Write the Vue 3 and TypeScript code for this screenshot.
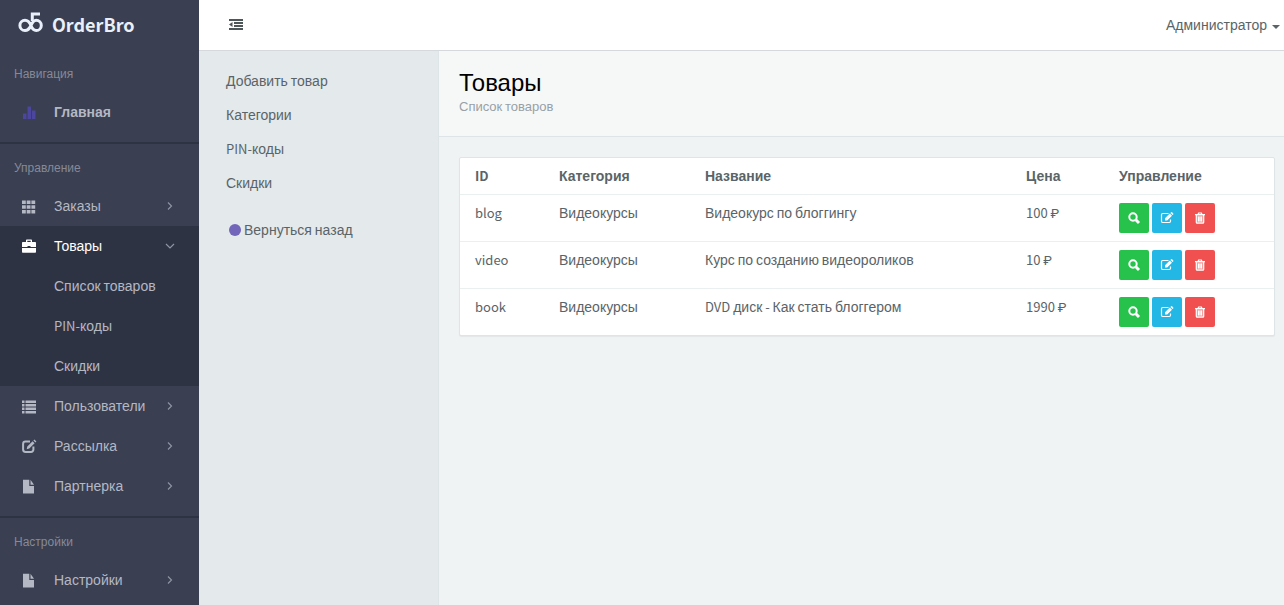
<script setup lang="ts">
import { h, type FunctionalComponent } from 'vue'

interface NavItem {
  label: string
  icon: string
  state?: 'closed' | 'open'
  strong?: boolean
  children?: string[]
}
interface NavSection {
  title: string
  items: NavItem[]
}
interface Product {
  id: string
  category: string
  name: string
  price: number
}

// Latin letters, digits and spaces use a different family than Cyrillic.
const MixedText: FunctionalComponent<{ text: string }> = (props) =>
  h(
    'span',
    (props.text.match(/[\x20-\x7e]+|₽|[^\x20-\x7e₽]+/g) ?? []).map((run) => {
      if (run === '₽') return h('span', { class: 'ruble' }, run)
      return /^[\x20-\x7e]/.test(run) ? h('span', { class: 'latin' }, run) : run
    }),
  )
MixedText.props = ['text']

const sections: NavSection[] = [
  { title: 'Навигация', items: [{ label: 'Главная', icon: 'bars', strong: true }] },
  {
    title: 'Управление',
    items: [
      { label: 'Заказы', icon: 'grid', state: 'closed' },
      {
        label: 'Товары',
        icon: 'case',
        state: 'open',
        children: ['Список товаров', 'PIN-коды', 'Скидки'],
      },
      { label: 'Пользователи', icon: 'list', state: 'closed' },
      { label: 'Рассылка', icon: 'edit', state: 'closed' },
      { label: 'Партнерка', icon: 'file', state: 'closed' },
    ],
  },
  { title: 'Настройки', items: [{ label: 'Настройки', icon: 'file', state: 'closed' }] },
]

const shortcuts = ['Добавить товар', 'Категории', 'PIN-коды', 'Скидки']
const columns = ['ID', 'Категория', 'Название', 'Цена', 'Управление']
const products: Product[] = [
  { id: 'blog', category: 'Видеокурсы', name: 'Видеокурс по блоггингу', price: 100 },
  { id: 'video', category: 'Видеокурсы', name: 'Курс по созданию видеороликов', price: 10 },
  { id: 'book', category: 'Видеокурсы', name: 'DVD диск - Как стать блоггером', price: 1990 },
]
</script>

<template>
  <div class="app">
    <aside class="sidebar">
      <a class="brand" href="#">
        <svg class="logo" viewBox="0 0 25 23" aria-hidden="true">
          <path d="M13 14.5C11.500 11 9.500 9.300 7 9.300a5.100 5.100 0 0 0 0 10.200c2.500 0 4.400-1.600 6-5C14.500 11 16 9.300 18.200 9.300a5.100 5.100 0 0 1 0 10.200c-2.400 0-4-1.700-5.200-5" />
          <path d="M14.300 10V3H22" />
        </svg>
        <span class="latin-brand">OrderBro</span>
      </a>
      <nav>
        <section v-for="section in sections" :key="section.title" class="nav-section">
          <h2>{{ section.title }}</h2>
          <ul>
            <li v-for="item in section.items" :key="item.label" :class="{ open: item.state === 'open' }">
              <a href="#" class="nav-link" :class="{ strong: item.strong }">
                <svg class="nav-icon" :class="item.icon" viewBox="0 0 16 16" aria-hidden="true">
                  <path v-if="item.icon === 'bars'" d="M2 8.500h3.500V14H2zM6.500 1.500H10V14H6.500zM11 5.500h3.500V14H11z" />
                  <path v-else-if="item.icon === 'grid'" d="M1 1.500h3.800v3.500H1zM5.700 1.500h3.800v3.500H5.700zM10.400 1.500h3.800v3.500h-3.800zM1 6.200h3.800v3.500H1zM5.700 6.200h3.800v3.500H5.700zM10.400 6.200h3.800v3.500h-3.800zM1 10.900h3.800v3.500H1zM5.700 10.900h3.800v3.500H5.700zM10.400 10.900h3.800v3.500h-3.800z" />
                  <path v-else-if="item.icon === 'case'" fill-rule="evenodd" d="M5 3V1.500C5 .7 5.500.5 6 .5h4c.6 0 1 .3 1 1V3h3c.6 0 1 .4 1 1v4H9.500V7h-3v1H1V4c0-.6.400-1 1-1zM6.300 3h3.400V1.700H6.300zM1 9h14v3.800c0 .6-.4 1-1 1H2c-.6 0-1-.4-1-1z" />
                  <path v-else-if="item.icon === 'list'" d="M1 1.500h2.500v2.400H1zM4.500 1.500H15v2.400H4.500zM1 5h2.500v2.400H1zM4.500 5H15v2.400H4.500zM1 8.500h2.500v2.400H1zM4.500 8.500H15v2.400H4.500zM1 12h2.500v2.400H1zM4.500 12H15v2.400H4.500z" />
                  <g v-else-if="item.icon === 'edit'">
                    <path class="stroke" d="M9 2.500H4.500A2.400 2.400 0 0 0 2.100 4.900v5.700A2.400 2.400 0 0 0 4.500 13H10a2.400 2.400 0 0 0 2.400-2.400V7.500" />
                    <path d="M5.700 10.300l.6-2.800L11.600 2.200l2 2-5.300 5.300zM12.400 1.500l1-1 2 2-1 1z" />
                  </g>
                  <path v-else d="M2 .8h6.300V7H13v7.500H2zM9.500.8L13 5.700H9.500z" />
                </svg>
                <span class="nav-label">{{ item.label }}</span>
                <svg v-if="item.state" class="chevron" viewBox="0 0 10 10" aria-hidden="true">
                  <path :d="item.state === 'open' ? 'M1 3l4 4 4-4' : 'M3 1.500l3.500 3.500L3 8.500'" />
                </svg>
              </a>
              <ul v-if="item.children">
                <li v-for="child in item.children" :key="child">
                  <a href="#" class="nav-link child"><MixedText :text="child" /></a>
                </li>
              </ul>
            </li>
          </ul>
        </section>
      </nav>
    </aside>

    <div class="page">
      <header class="topbar">
        <button type="button" class="toggle" aria-label="Меню">
          <svg viewBox="0 0 14 12" aria-hidden="true">
            <path d="M0 0h14v2H0zM5 3h9v2H5zM5 6h9v2H5zM0 9h14v2H0zM0 5.500L3.500 3v5z" />
          </svg>
        </button>
        <button type="button" class="user">Администратор <span class="caret"></span></button>
      </header>

      <div class="body">
        <nav class="shortcuts">
          <a v-for="link in shortcuts" :key="link" href="#"><MixedText :text="link" /></a>
          <a href="#" class="back"><span class="dot"></span><MixedText text="Вернуться назад" /></a>
        </nav>

        <main>
          <div class="heading">
            <h1>Товары</h1>
            <p><MixedText text="Список товаров" /></p>
          </div>
          <div class="panel">
            <table>
              <colgroup>
                <col class="col-id" /><col class="col-category" /><col /><col class="col-price" /><col class="col-actions" />
              </colgroup>
              <thead>
                <tr>
                  <th v-for="column in columns" :key="column" scope="col"><MixedText :text="column" /></th>
                </tr>
              </thead>
              <tbody>
                <tr v-for="product in products" :key="product.id">
                  <td><MixedText :text="product.id" /></td>
                  <td>{{ product.category }}</td>
                  <td><MixedText :text="product.name" /></td>
                  <td><MixedText :text="`${product.price} ₽`" /></td>
                  <td>
                    <div class="actions">
                      <button type="button" class="view" aria-label="Просмотр">
                        <svg viewBox="0 0 12 12" aria-hidden="true">
                          <circle cx="5" cy="5" r="3.700" />
                          <path class="handle" d="M7.800 7.800L11 11" />
                        </svg>
                      </button>
                      <button type="button" class="change" aria-label="Изменить">
                        <svg viewBox="0 0 12 12" aria-hidden="true">
                          <path class="frame" d="M7.500 1.500H1.700A1.200 1.200 0 0 0 .5 2.700v6.600a1.200 1.200 0 0 0 1.200 1.200h6.600a1.200 1.200 0 0 0 1.200-1.200V7.500" />
                          <path class="solid" d="M4 8.500V6.300l4.800-4.800L11 3.700 6.200 8.500zM9.400 1l.7-.7c.3-.3.700-.3 1 0l1.100 1.100c.3.300.3.700 0 1l-.700.7z" />
                        </svg>
                      </button>
                      <button type="button" class="remove" aria-label="Удалить">
                        <svg viewBox="0 0 12 12" aria-hidden="true">
                          <path class="tint" d="M2.300 3h7.400v8H2.300z" />
                          <path class="bin" d="M1 2.700h10M2.300 3v7.200c0 .6.300 1 .8 1h5.800c.5 0 .8-.4.8-1V3M4 2.500l.6-1.500h2.800L8 2.500M4.500 4.500v5M6 4.500v5M7.500 4.500v5" />
                        </svg>
                      </button>
                    </div>
                  </td>
                </tr>
              </tbody>
            </table>
          </div>
        </main>
      </div>
    </div>
  </div>
</template>

<style>
body {
  margin: 0;
}
.latin {
  font-family: 'Noto Sans CJK SC', sans-serif;
  font-size: 13px;
  line-height: 1;
}
.ruble {
  font-family: Roboto, sans-serif;
  font-size: 13px;
  line-height: 1;
}
</style>

<style scoped>
.app {
  display: flex;
  min-height: 100vh;
  font-family: 'Liberation Sans', Arial, sans-serif;
  font-size: 14px;
  line-height: 20px;
  color: #5a6468;
  background: #f0f3f4;
}
a {
  color: inherit;
  text-decoration: none;
}
ul {
  margin: 0;
  padding: 0;
  list-style: none;
}
button {
  padding: 0;
  border: 0;
  background: none;
  font: inherit;
  color: inherit;
  cursor: pointer;
}

.sidebar {
  flex: 0 0 199px;
  background: #3a3f51;
  color: #b4b8c4;
}
.brand {
  display: flex;
  align-items: center;
  gap: 9px;
  height: 50px;
  padding-left: 18px;
  color: #eaf0fa;
}
.logo {
  width: 25px;
  height: 23px;
  margin-bottom: 6px;
  fill: none;
  stroke: currentColor;
  stroke-width: 3;
}
.latin-brand {
  padding-bottom: 2px;
  font-family: 'Noto Sans CJK SC', sans-serif;
  font-size: 18px;
  font-weight: 700;
}
.nav-section {
  padding-bottom: 10px;
}
.nav-section + .nav-section {
  border-top: 2px solid #2e3344;
}
.nav-section h2 {
  margin: 0;
  padding: 15px 14px 9px;
  font-size: 12px;
  font-weight: 400;
  line-height: 18px;
  color: #868a98;
}
.nav-link {
  display: flex;
  align-items: center;
  height: 40px;
  padding: 0 24px 0 21px;
}
.nav-link.child {
  padding-left: 54px;
}
.strong {
  font-weight: 700;
}
.open {
  background: #2e3344;
}
.open > .nav-link {
  color: #fff;
}
.nav-icon {
  width: 16px;
  height: 16px;
  margin-top: 2px;
  margin-right: 17px;
  fill: currentColor;
}
.nav-icon.bars {
  fill: #4c46a0;
}
.stroke {
  fill: none;
  stroke: currentColor;
  stroke-width: 2;
}
.nav-label {
  flex: 1;
}
.chevron {
  width: 10px;
  height: 10px;
  fill: none;
  stroke: #8f94a3;
  stroke-width: 1.2;
}

.page {
  display: flex;
  flex: 1;
  flex-direction: column;
  min-width: 0;
}
.topbar {
  display: flex;
  align-items: center;
  justify-content: space-between;
  height: 50px;
  padding: 0 4px 0 30px;
  background: #fff;
  border-bottom: 1px solid #d5d9dc;
}
.toggle svg {
  display: block;
  width: 14px;
  height: 12px;
  fill: #4d5759;
}
.user {
  display: flex;
  align-items: center;
  gap: 5px;
}
.caret {
  margin-top: 3px;
  border: 4px solid transparent;
  border-top-color: currentColor;
  border-bottom: 0;
}
.body {
  display: flex;
  flex: 1;
}
.shortcuts {
  box-sizing: border-box;
  flex: 0 0 240px;
  padding: 13px 27px;
  background: #e4e9ec;
  border-right: 1px solid #dee5e7;
}
.shortcuts a {
  display: flex;
  align-items: center;
  height: 34px;
}
.shortcuts .back {
  gap: 3px;
  margin-top: 13px;
  padding-left: 3px;
}
.dot {
  width: 12px;
  height: 12px;
  border-radius: 50%;
  background: #7266ba;
}

main {
  flex: 1;
  min-width: 0;
}
.heading {
  padding: 18px 20px 20px;
  background: #f6f8f8;
  border-bottom: 1px solid #dee5e7;
}
.heading h1 {
  margin: 0;
  font-size: 24px;
  font-weight: 400;
  line-height: 28px;
  color: #000;
}
.heading p {
  margin: 0;
  font-size: 13px;
  line-height: 19px;
  color: #98a0a6;
}
.heading :deep(.latin) {
  font-size: 12px;
}
.panel {
  margin: 20px 9px 20px 20px;
  background: #fff;
  border: 1px solid #dee5e7;
  border-radius: 2px;
  box-shadow: 0 1px 1px rgba(0, 0, 0, 0.05);
}
table {
  width: 100%;
  table-layout: fixed;
  border-collapse: separate;
  border-spacing: 0;
}
.col-id {
  width: 84px;
}
.col-category {
  width: 146px;
}
.col-price {
  width: 93px;
}
.col-actions {
  width: 170px;
}
th,
td {
  padding: 8px 15px;
  text-align: left;
  vertical-align: top;
}
td {
  border-top: 1px solid #eaeff0;
}
.actions {
  display: flex;
  gap: 3px;
}
.actions button {
  display: flex;
  align-items: center;
  justify-content: center;
  width: 30px;
  height: 30px;
  border-radius: 2px;
  color: #fff;
}
.actions .view {
  background: #27c24c;
}
.actions .change {
  background: #23b7e5;
}
.actions .remove {
  background: #f05050;
}
.actions svg {
  width: 12px;
  height: 12px;
  overflow: visible;
  fill: none;
  stroke: currentColor;
  stroke-width: 2;
}
.actions .handle {
  stroke-width: 3;
}
.actions .frame,
.actions .bin {
  stroke-width: 1.2;
}
.actions .solid {
  fill: currentColor;
  stroke: none;
}
.actions .tint {
  fill: currentColor;
  fill-opacity: 0.4;
  stroke: none;
}
</style>
